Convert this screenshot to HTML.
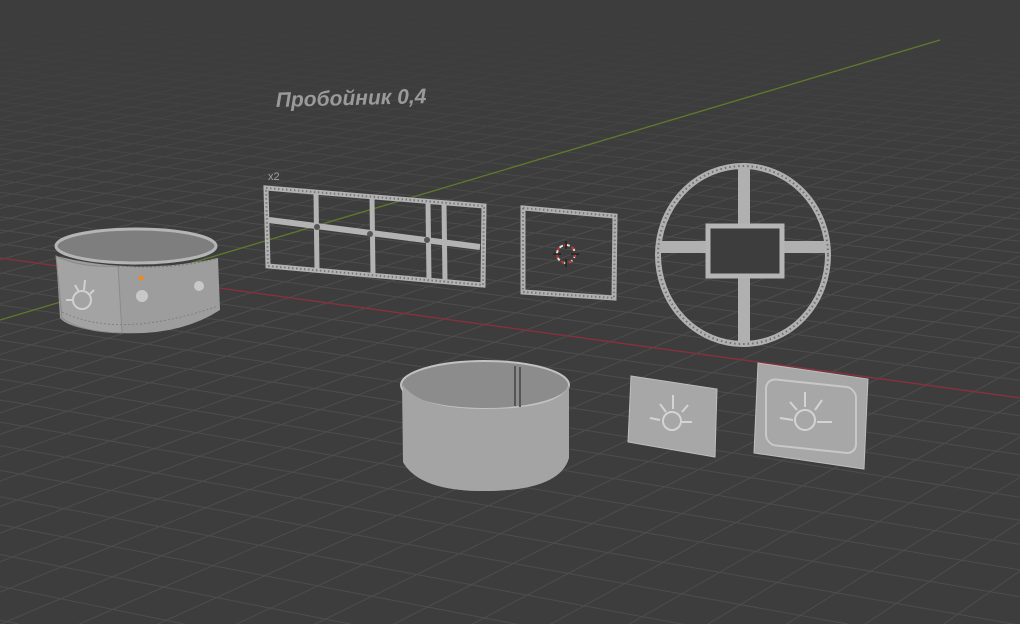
<!DOCTYPE html>
<html><head><meta charset="utf-8"><style>
html,body{margin:0;padding:0;background:#3d3d3d;overflow:hidden;width:1020px;height:624px}
svg{display:block}
</style></head><body>
<svg id="s" width="1020" height="624" viewBox="0 0 1020 624" xmlns="http://www.w3.org/2000/svg">
<defs><linearGradient id="fade" x1="0" y1="0" x2="0" y2="1">
<stop offset="0" stop-color="#3d3d3d" stop-opacity="1"/>
<stop offset="0.3" stop-color="#3d3d3d" stop-opacity="0.85"/>
<stop offset="1" stop-color="#3d3d3d" stop-opacity="0"/></linearGradient></defs>
<rect width="1020" height="624" fill="#3d3d3d"/>
<g id="grid" stroke="#4d4d4d" stroke-width="1"></g>
<rect width="1020" height="230" fill="url(#fade)"/>
<line x1="0" y1="258" x2="1020" y2="398" stroke="#8a2f3c" stroke-width="1.3"/>
<line x1="0" y1="320" x2="940" y2="40" stroke="#5e7a2c" stroke-width="1.3"/>

<text x="276" y="107" font-family="Liberation Sans, sans-serif" font-size="21" font-weight="bold" font-style="italic" fill="#9a9a9a" transform="rotate(-1.5 276 107)">Пробойник 0,4</text>
<text x="268" y="180" font-family="Liberation Sans, sans-serif" font-size="11" fill="#a0a0a0">x2</text>

<!-- bracelet -->
<g>
<ellipse cx="136" cy="246" rx="80" ry="17" fill="#7e7e7e" stroke="#b5b5b5" stroke-width="3"/>
<path d="M56 256 Q136 276 218 258 L220 310 Q180 336 120 333 Q70 330 60 318 Z" fill="#9d9d9d"/>
<path d="M56 256 Q80 268 118 266 L122 333 Q80 332 62 318 Z" fill="#a3a3a3" stroke="#8a8a8a"/>
<path d="M118 266 Q175 270 218 258" fill="none" stroke="#777" stroke-dasharray="2 2"/>
<path d="M62 312 Q120 340 218 306" fill="none" stroke="#808080" stroke-dasharray="2 2"/>
<circle cx="142" cy="296" r="6" fill="#c8c8c8"/>
<circle cx="199" cy="286" r="5" fill="#c8c8c8"/>
<circle cx="141" cy="278" r="2.5" fill="#f08a1a"/>
<g stroke="#d0d0d0" stroke-width="2" fill="none"><circle cx="82" cy="300" r="9"/><path d="M75 285 L79 292 M85 280 L84 290 M94 290 L90 294 M66 300 L73 300"/></g>
</g>

<!-- long frame -->
<g fill="none" stroke="#b3b3b3">
<path d="M266 188 L484 206 L483 285 L268 266 Z" stroke-width="5"/>
<path d="M269 220 L480 247" stroke-width="6"/>
<path d="M316 193 L317 270 M372 198 L373 275 M428 202 L429 281 M444 204 L445 282" stroke-width="5"/>
</g>
<g fill="#555"><circle cx="317" cy="227" r="3"/><circle cx="370" cy="234" r="3"/><circle cx="427" cy="240" r="3"/></g>
<g fill="none" stroke="#777" stroke-width="2" stroke-dasharray="1.5 2.5"><path d="M266 188 L484 206 L483 285 L268 266 Z"/></g>

<!-- small square frame -->
<path d="M523 208 L615 216 L614 298 L523 292 Z" fill="none" stroke="#b0b0b0" stroke-width="5"/>
<path d="M523 208 L615 216 L614 298 L523 292 Z" fill="none" stroke="#777" stroke-width="2" stroke-dasharray="1.5 2.5"/>
<g><circle cx="566" cy="254" r="9" fill="none" stroke="#e0e0e0" stroke-width="2" stroke-dasharray="4 3"/><circle cx="566" cy="254" r="9" fill="none" stroke="#cc2a2a" stroke-width="2" stroke-dasharray="3 5"/><path d="M566 241 V249 M566 259 V267 M553 254 H561 M571 254 H579" stroke="#222" stroke-width="1.5"/></g>

<!-- circle frame -->
<g fill="none" stroke="#b0b0b0">
<ellipse cx="743" cy="255" rx="85" ry="89" stroke-width="6"/>
<path d="M744 168 V342 M660 247 H828" stroke-width="12"/>
</g>
<ellipse cx="743" cy="255" rx="85" ry="89" fill="none" stroke="#6f6f6f" stroke-width="2" stroke-dasharray="1.5 3"/>
<rect x="708" y="226" width="74" height="50" fill="#3d3d3d" stroke="#b5b5b5" stroke-width="5"/>

<!-- cylinder -->
<path d="M402 385 L403 462 Q420 492 488 491 Q560 490 568 458 L569 385 Z" fill="#a2a2a2"/>
<ellipse cx="485" cy="385" rx="84" ry="24" fill="#8c8c8c" stroke="#c2c2c2" stroke-width="2"/>
<path d="M403 385 Q420 409 485 409 Q560 409 569 385 L569 458 Q560 490 488 491 Q420 492 403 462 Z" fill="#a4a4a4"/>
<g fill="#555"><rect x="514" y="366" width="2" height="40"/><rect x="519" y="367" width="2" height="40"/></g>

<!-- plates -->
<path d="M631 376 L717 389 L715 457 L628 442 Z" fill="#a7a7a7" stroke="#bdbdbd"/>
<g stroke="#d4d4d4" stroke-width="2" fill="none"><circle cx="672" cy="421" r="9"/><path d="M660 404 L666 412 M673 395 L673 409 M688 405 L682 412 M650 418 L660 420 M692 422 L682 422"/></g>
<path d="M758 363 L868 379 L864 469 L754 453 Z" fill="#a7a7a7" stroke="#bdbdbd"/>
<rect x="766" y="380" width="90" height="66" rx="10" fill="none" stroke="#c8c8c8" stroke-width="2" transform="skewY(6) translate(0,-82)"/>
<g stroke="#d4d4d4" stroke-width="2" fill="none"><circle cx="805" cy="420" r="10"/><path d="M790 402 L797 410 M805 392 L805 407 M822 400 L815 410 M780 418 L793 420 M832 422 L817 422"/></g>
</svg>
<script>
(function(){
var O=[142.5,277.5],VR=[-4803,-400],VG=[2416,-400];
var ka=0.0072,kb=0.0152;
var Da=[(VR[0]-O[0])*ka,(VR[1]-O[1])*ka],Db=[(VG[0]-O[0])*kb,(VG[1]-O[1])*kb];
function P(u,v){var d=1+ka*u+kb*v;return [O[0]+(u*Da[0]+v*Db[0])/d,O[1]+(u*Da[1]+v*Db[1])/d];}
var g=document.getElementById('grid'),h='';
function line(a,b){var dx=b[0]-a[0],dy=b[1]-a[1];var x1=a[0]-dx*50,y1=a[1]-dy*50,x2=a[0]+dx*50,y2=a[1]+dy*50;h+='<line x1="'+x1.toFixed(1)+'" y1="'+y1.toFixed(1)+'" x2="'+x2.toFixed(1)+'" y2="'+y2.toFixed(1)+'"/>';}
for(var u=-135;u<=500;u++){line(VG,P(u,0));}
for(var v=-64;v<=500;v++){line(VR,P(0,v));}
g.innerHTML=h;
})();
</script>
</body></html>
